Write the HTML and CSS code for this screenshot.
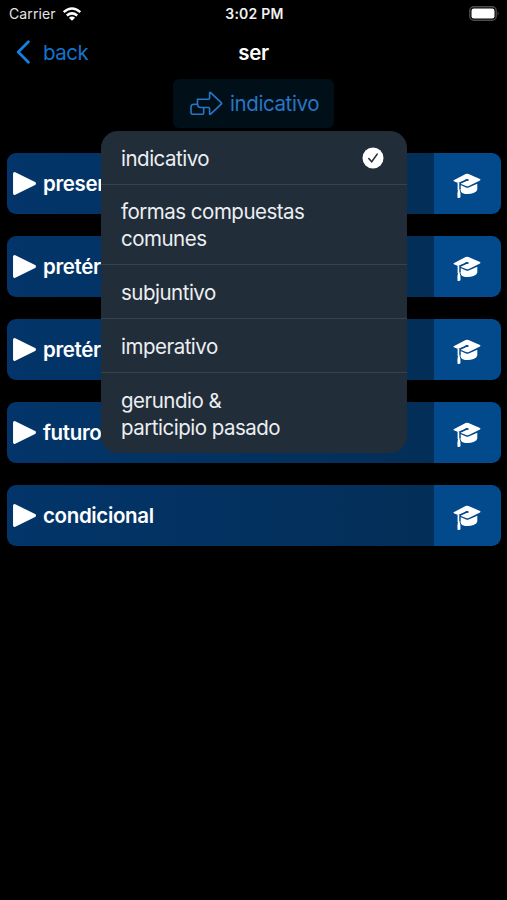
FILE: index.html
```html
<!DOCTYPE html>
<html lang="es">
<head>
    <meta charset="UTF-8">
    <meta name="viewport" content="width=device-width, initial-scale=1">
    <title>ser</title>
    <link rel="stylesheet" href="styles.css">
</head>
<body>
<svg class="sprite">
    <symbol id="play" viewBox="0 0 24 24">
        <path d="M2.5 2.5 L21.5 12 L2.5 21.5 Z" fill="#fff" stroke="#fff" stroke-width="3" stroke-linejoin="round"/>
    </symbol>
    <symbol id="cap" viewBox="0 0 28 26">
        <path d="M7.5 12 L13 14.4 Q14.3 14.9 15.7 14.4 L24.3 10.8 V16.5 Q24 18.5 20.5 20 Q14.5 22.2 9.2 19.9 Q7.6 19 7.5 17 Z" fill="#fff"/>
        <path d="M0.7 7.2 L12.6 1 Q14 0.4 15.5 1 L27 5.9 Q28 6.7 27 7.4 L15.8 12.9 Q14.4 13.4 13 12.9 L7.5 10.7 L14.6 7.6 L13.6 6.3 L5.1 9.9 L0.8 8.2 Q0.2 7.7 0.7 7.2 Z" fill="#fff"/>
        <path d="M5.1 9.8 V17" fill="none" stroke="#fff" stroke-width="1"/>
        <path d="M5.1 10 H6.5 L6.5 16.5 Q7.8 20 7.5 24 Q7.3 25.2 4.6 25 Q4 21 5 16.5 Z" fill="#fff"/>
        <path d="M14 6.9 L7 9.9 V16" fill="none" stroke="#034a8d" stroke-width="1"/>
        <ellipse cx="14" cy="7" rx="1.8" ry="0.9" fill="#034a8d"/>
    </symbol>
</svg>

<div class="status-bar">
    <div class="carrier">
        <span>Carrier</span>
        <svg width="20" height="14" viewBox="0 0 20 14" fill="none" stroke="#fff" stroke-width="2.5">
            <path d="M1.7 5.1 Q10 -2 18.3 5.1"/>
            <path d="M4.8 8.5 Q10 4.2 15.2 8.5"/>
            <path d="M10 13.8 L6.9 10.7 Q10 8.3 13.1 10.7 Z" fill="#fff" stroke="none"/>
        </svg>
    </div>
    <span class="time">3:02 PM</span>
    <svg class="battery" width="31" height="15" viewBox="0 0 31 15">
        <rect x="0.8" y="0.8" width="26.4" height="13.4" rx="4" fill="none" stroke="#4c4c4e" stroke-width="1.4"/>
        <rect x="2.5" y="2.5" width="23" height="10" rx="2.3" fill="#fff"/>
        <path d="M28.7 5.2 Q30.7 7.5 28.7 9.8 Z" fill="#4c4c4e"/>
    </svg>
</div>

<div class="nav">
    <a class="back">
        <svg width="15" height="24" viewBox="0 0 15 24" fill="none" stroke="#1580e6" stroke-width="2.7" stroke-linecap="round" stroke-linejoin="round">
            <path d="M12.4 1.8 L2.2 12 L12.4 22.2"/>
        </svg>
        <span>back</span>
    </a>
    <span class="title">ser</span>
</div>

<div class="picker">
    <button class="mood">
        <svg width="33" height="25" viewBox="0 0 33 25" fill="none" stroke="#2876c6" stroke-width="1.6" stroke-linejoin="round">
            <path d="M7.5 8.2 H18.3 Q19.6 8.2 19.6 6.8 V2 Q19.8 1 20.6 1.7 L31.2 11.6 Q32 12.4 31.2 13.2 L20.6 23.2 Q19.8 23.8 19.6 22.8 V17.8 Q19.6 16.5 18.3 16.5 H11 Q7.5 16.5 7.5 12.8 Z"/>
            <path d="M7.5 13.3 H4 Q1 13.3 1 16.2 V21.2 Q1 23.2 3 23.2 H12.5 Q13.7 23.2 13.7 22 V16.6"/>
        </svg>
        <span>indicativo</span>
    </button>
    <div class="menu">
        <div class="menu-item">
            <span>indicativo</span>
            <svg width="22" height="22" viewBox="0 0 22 22">
                <circle cx="11" cy="11" r="10.5" fill="#fff"/>
                <path d="M6.8 11.5 L9.7 14.8 L15.2 7.1" fill="none" stroke="#27303a" stroke-width="1.6" stroke-linecap="round" stroke-linejoin="round"/>
            </svg>
        </div>
        <div class="menu-item tall"><span>formas compuestas<br>comunes</span></div>
        <div class="menu-item"><span>subjuntivo</span></div>
        <div class="menu-item"><span>imperativo</span></div>
        <div class="menu-item tall"><span>gerundio &amp;<br>participio pasado</span></div>
    </div>
</div>

<div class="tenses">
    <div class="tense">
        <div class="tense-name"><svg class="play"><use href="#play"/></svg>presente</div>
        <div class="tense-quiz"><svg class="cap"><use href="#cap"/></svg></div>
    </div>
    <div class="tense">
        <div class="tense-name"><svg class="play"><use href="#play"/></svg>pretérito</div>
        <div class="tense-quiz"><svg class="cap"><use href="#cap"/></svg></div>
    </div>
    <div class="tense">
        <div class="tense-name"><svg class="play"><use href="#play"/></svg>pretérito</div>
        <div class="tense-quiz"><svg class="cap"><use href="#cap"/></svg></div>
    </div>
    <div class="tense">
        <div class="tense-name"><svg class="play"><use href="#play"/></svg>futuro</div>
        <div class="tense-quiz"><svg class="cap"><use href="#cap"/></svg></div>
    </div>
    <div class="tense">
        <div class="tense-name"><svg class="play"><use href="#play"/></svg>condicional</div>
        <div class="tense-quiz"><svg class="cap"><use href="#cap"/></svg></div>
    </div>
</div>
</body>
</html>
```

FILE: styles.css
```css
* {
    box-sizing: border-box;
}

body {
    margin: 0;
    min-height: 100vh;
    background-color: #000;
    color: #fff;
    font-family: Inter, "Liberation Sans", sans-serif;
}

.sprite {
    display: none;
}

.status-bar {
    display: grid;
    grid-template-columns: 1fr auto 1fr;
    align-items: center;
    height: 27px;
    padding: 0 7px 0 9px;
    font-size: 14px;
}

.carrier {
    display: flex;
    align-items: center;
    gap: 6px;
    color: #e4e4e4;
    letter-spacing: 0.1px;
}

.time {
    font-weight: 600;
    font-size: 14px;
    letter-spacing: 0.25px;
    color: #f2f2f2;
}

.battery {
    justify-self: end;
}

.nav {
    display: grid;
    grid-template-columns: 1fr auto 1fr;
    align-items: center;
    height: 50px;
    padding: 0 16px;
}

.back {
    display: flex;
    align-items: center;
    gap: 12px;
    color: #1373d0;
    font-size: 20.5px;
    letter-spacing: -0.5px;
}

.title {
    padding-top: 1px;
    font-size: 20.5px;
    font-weight: 600;
    letter-spacing: -0.3px;
}

.picker {
    position: relative;
    display: flex;
    justify-content: center;
    padding-top: 2px;
}

.mood {
    display: flex;
    align-items: center;
    gap: 7px;
    width: 161px;
    height: 49px;
    padding: 0 0 0 17px;
    border: none;
    border-radius: 6px;
    background-color: #010f19;
    color: #2876c6;
    font-family: inherit;
    font-size: 20.5px;
    letter-spacing: -0.4px;
}

.menu {
    position: absolute;
    top: 54px;
    left: 101px;
    width: 306px;
    height: 322px;
    border-radius: 17px;
    background-color: #212d39;
    color: #eceff2;
    font-size: 20.5px;
    letter-spacing: -0.5px;
    line-height: 27px;
    overflow: hidden;
}

.menu-item {
    display: flex;
    align-items: center;
    justify-content: space-between;
    height: 54px;
    padding: 1px 23px 0 20px;
    border-bottom: 1px solid #36424e;
}

.menu-item.tall {
    height: 80px;
}

.menu-item:last-child {
    border-bottom: none;
}

.tenses {
    display: flex;
    flex-direction: column;
    gap: 22px;
    padding: 25px 6px 0 7px;
}

.tense {
    display: flex;
    height: 61px;
    border-radius: 9px;
    overflow: hidden;
}

.tense-name {
    flex: 1;
    display: flex;
    align-items: center;
    gap: 6px;
    padding-left: 5px;
    background: linear-gradient(90deg, #03356a, #032e57);
    font-size: 20.5px;
    font-weight: 600;
    letter-spacing: -0.35px;
}

.tense-quiz {
    display: flex;
    align-items: center;
    justify-content: center;
    width: 67px;
    padding-right: 1px;
    background-color: #034a8d;
}

.play {
    width: 25px;
    height: 25px;
}

.cap {
    width: 28px;
    height: 26px;
    margin-top: 4px;
}
```
